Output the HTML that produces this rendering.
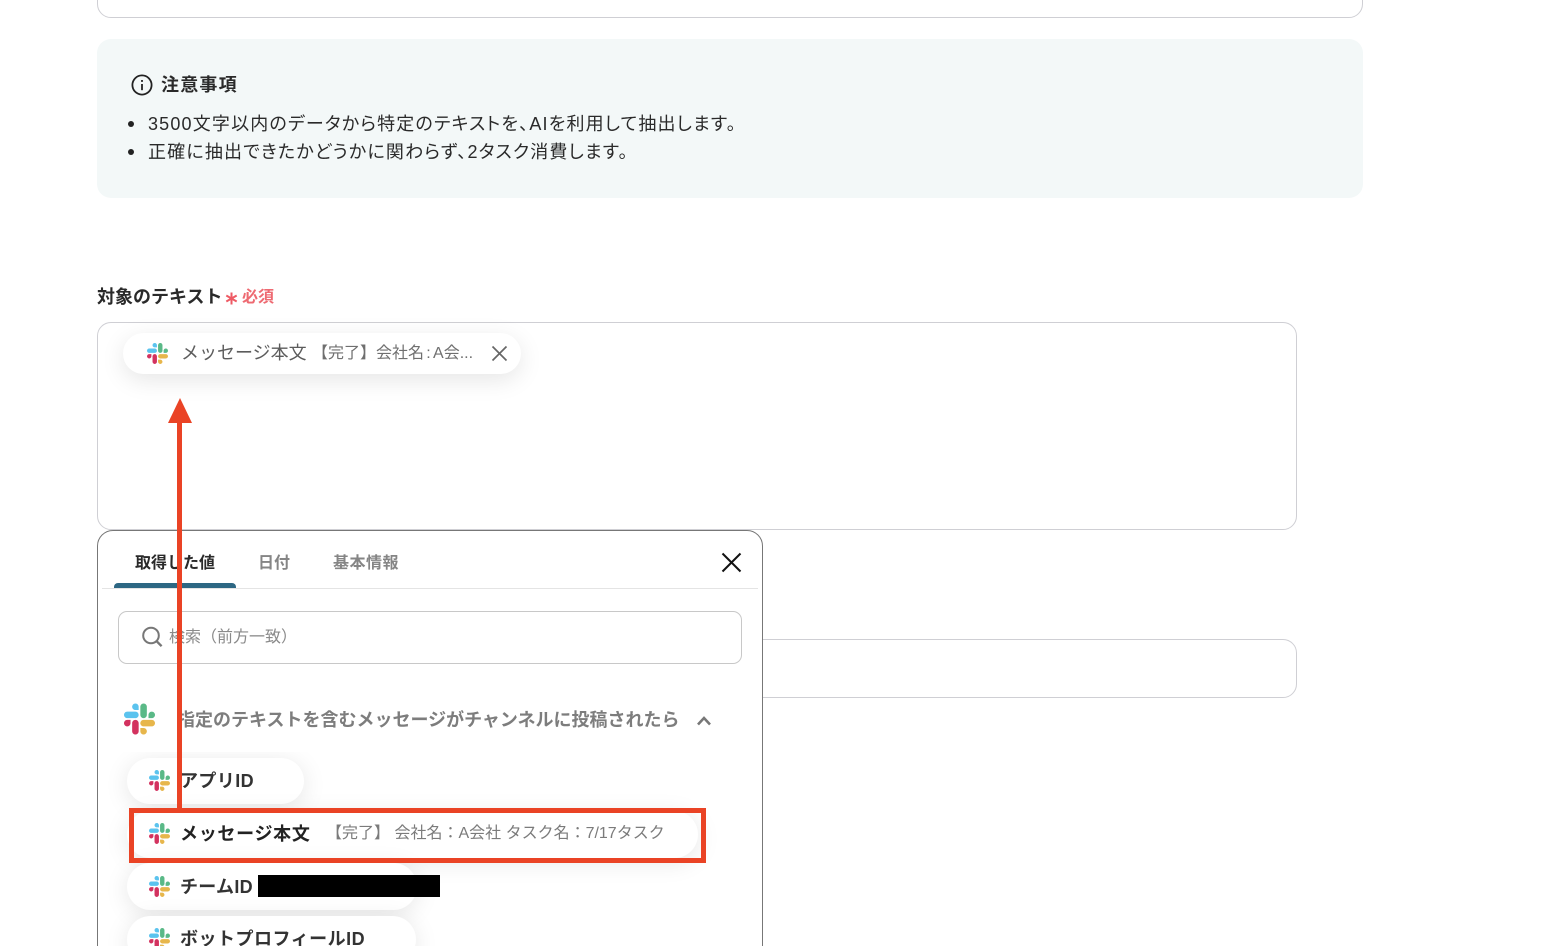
<!DOCTYPE html>
<html lang="ja">
<head>
<meta charset="utf-8">
<style>
html,body{margin:0;padding:0;background:#fff;width:1564px;height:946px;overflow:hidden;}
#root{position:absolute;left:0;top:0;width:1564px;height:946px;overflow:hidden;font-family:"Liberation Sans","Noto Sans CJK JP",sans-serif;color:#2a2a2a;}
.a{position:absolute;white-space:nowrap;}
.box{position:absolute;box-sizing:border-box;background:#fff;border:1px solid #cfcfd4;}
.pill{position:absolute;box-sizing:border-box;background:#fff;border-radius:24px;box-shadow:0 4px 24px rgba(0,0,0,.10);}
.t{position:absolute;white-space:nowrap;line-height:24px;}
.n{font-feature-settings:"palt";letter-spacing:1.17px;}
svg{position:absolute;display:block;}
</style>
</head>
<body>
<div id="root">
<svg width="0" height="0" style="position:absolute">
  <symbol id="slack" viewBox="0 0 122.8 122.8">
    <path d="M25.8 77.6c0 7.1-5.8 12.9-12.9 12.9S0 84.7 0 77.6s5.8-12.9 12.9-12.9h12.9v12.9z" fill="#d3325f"/>
    <path d="M32.3 77.6c0-7.1 5.8-12.9 12.9-12.9s12.9 5.8 12.9 12.9v32.3c0 7.1-5.8 12.9-12.9 12.9s-12.9-5.8-12.9-12.9V77.6z" fill="#d3325f"/>
    <path d="M45.2 25.8c-7.1 0-12.9-5.8-12.9-12.9S38.1 0 45.2 0s12.9 5.8 12.9 12.9v12.9H45.2z" fill="#5bc3ee"/>
    <path d="M45.2 32.3c7.1 0 12.9 5.8 12.9 12.9s-5.8 12.9-12.9 12.9H12.9C5.8 58.1 0 52.3 0 45.2s5.8-12.9 12.9-12.9h32.3z" fill="#5bc3ee"/>
    <path d="M97 45.2c0-7.1 5.8-12.9 12.9-12.9s12.9 5.8 12.9 12.9-5.8 12.9-12.9 12.9H97V45.2z" fill="#5ab987"/>
    <path d="M90.5 45.2c0 7.1-5.8 12.9-12.9 12.9s-12.9-5.8-12.9-12.9V12.9C64.7 5.8 70.5 0 77.6 0s12.9 5.8 12.9 12.9v32.3z" fill="#5ab987"/>
    <path d="M77.6 97c7.1 0 12.9 5.8 12.9 12.9s-5.8 12.9-12.9 12.9-12.9-5.8-12.9-12.9V97h12.9z" fill="#e7b64b"/>
    <path d="M77.6 90.5c-7.1 0-12.9-5.8-12.9-12.9s5.8-12.9 12.9-12.9h32.3c7.1 0 12.9 5.8 12.9 12.9s-5.8 12.9-12.9 12.9H77.6z" fill="#e7b64b"/>
  </symbol>
</svg>

<!-- top box -->
<div class="box" style="left:97px;top:-40px;width:1266px;height:58px;border-radius:14px;"></div>

<!-- notice -->
<div class="a" style="left:97px;top:39px;width:1266px;height:159px;background:#f3f8f8;border-radius:14px;"></div>
<svg style="left:131px;top:74px" width="22" height="22" viewBox="0 0 22 22" fill="none" stroke="#222" stroke-width="1.8"><circle cx="11" cy="11" r="9.6"/><path d="M11 10v6.2"/><path d="M11 6v1.9"/></svg>
<div class="t" style="left:161px;top:73px;font-size:18px;font-weight:700;letter-spacing:1.2px;color:#2a2a2a;">注意事項</div>
<div class="a" style="left:128px;top:121px;width:6px;height:6px;border-radius:50%;background:#222;"></div>
<div class="t n" style="left:148px;top:112px;font-size:18px;color:#2a2a2a;">3500文字以内のデータから特定のテキストを、AIを利用して抽出します。</div>
<div class="a" style="left:128px;top:149px;width:6px;height:6px;border-radius:50%;background:#222;"></div>
<div class="t n" style="left:148px;top:140px;font-size:18px;color:#2a2a2a;">正確に抽出できたかどうかに関わらず、2タスク消費します。</div>

<!-- label -->
<div class="t" style="left:97px;top:285px;font-size:18px;font-weight:700;color:#2a2a2a;">対象のテキスト</div>
<svg style="left:225px;top:292px" width="13" height="13" viewBox="0 0 13 13" fill="none" stroke="#ee5a64" stroke-width="2"><path d="M6.5 0.5v12M1.3 3.5l10.4 6M11.7 3.5l-10.4 6"/></svg>
<div class="t" style="left:242px;top:286px;font-size:16px;font-weight:700;color:#ee6a72;">必須</div>

<!-- textarea -->
<div class="box" style="left:97px;top:322px;width:1200px;height:208px;border-radius:14px;"></div>
<div class="pill" style="left:123px;top:333px;width:398px;height:41px;box-shadow:0 6px 24px rgba(0,0,0,.10);"></div>
<svg style="left:147px;top:343px" width="21" height="21"><use href="#slack"/></svg>
<div class="t" style="left:181px;top:341px;font-size:18px;color:#5c5c5c;">メッセージ本文</div>
<div class="t" style="left:312px;top:342px;font-size:16px;color:#6f6f6f;">【完了】会社名<span style="display:inline-block;width:9px;text-align:center;">:</span>A会...</div>
<svg style="left:491px;top:345px" width="17" height="17" viewBox="0 0 17 17" fill="none" stroke="#666" stroke-width="1.7"><path d="M1.5 1.5l14 14M15.5 1.5l-14 14"/></svg>

<!-- second input -->
<div class="box" style="left:97px;top:639px;width:1200px;height:59px;border-radius:14px;"></div>

<!-- popup -->
<div class="a" style="left:97px;top:530px;width:666px;height:440px;box-sizing:border-box;background:#fff;border:1px solid #777;border-radius:16px;"></div>
<div class="a" style="left:102px;top:588px;width:656px;height:1px;background:#e4e4e4;"></div>
<div class="a" style="left:114px;top:583px;width:122px;height:5px;background:#2d6783;border-radius:4px 4px 0 0;"></div>
<div class="t" style="left:135px;top:552px;font-size:16px;font-weight:700;color:#2a2a2a;">取得した値</div>
<div class="t" style="left:258px;top:552px;font-size:16px;font-weight:700;color:#858585;">日付</div>
<div class="t" style="left:333px;top:552px;font-size:16px;font-weight:700;letter-spacing:.5px;color:#858585;">基本情報</div>
<svg style="left:721px;top:552px" width="21" height="21" viewBox="0 0 21 21" fill="none" stroke="#111" stroke-width="2"><path d="M1.5 1.5l18 18M19.5 1.5l-18 18"/></svg>

<div class="box" style="left:118px;top:611px;width:624px;height:53px;border-radius:9px;border-color:#c8c8c8;"></div>
<svg style="left:141px;top:626px" width="22" height="22" viewBox="0 0 22 22" fill="none" stroke="#777" stroke-width="2"><circle cx="10" cy="9.5" r="7.8"/><path d="M15.6 15.2l5 5" stroke-width="2.4"/></svg>
<div class="t" style="left:169px;top:626px;font-size:16px;color:#8a8a8a;">検索（前方一致）</div>

<!-- section -->
<svg style="left:124px;top:703px" width="31" height="32"><use href="#slack"/></svg>
<div class="t" style="left:177px;top:708px;font-size:18px;font-weight:700;color:#7d7d7d;">指定のテキストを含むメッセージがチャンネルに投稿されたら</div>
<svg style="left:696px;top:715px" width="16" height="11" viewBox="0 0 16 11" fill="none" stroke="#777" stroke-width="2.6"><path d="M2 9.5l6-6.5 6 6.5"/></svg>

<!-- list -->
<div class="a" style="left:99px;top:752px;width:662px;height:194px;overflow:hidden;">
<div class="pill" style="left:28px;top:6px;width:177px;height:46px;"></div>
<div class="pill" style="left:28px;top:59px;width:571px;height:47px;"></div>
<div class="pill" style="left:28px;top:111px;width:290px;height:47px;"></div>
<div class="pill" style="left:28px;top:164px;width:289px;height:47px;"></div>
</div>

<svg style="left:149px;top:770px" width="21" height="21"><use href="#slack"/></svg>
<div class="t" style="left:180px;top:769px;font-size:18px;font-weight:700;letter-spacing:.4px;color:#333;">アプリID</div>

<svg style="left:149px;top:823px" width="21" height="21"><use href="#slack"/></svg>
<div class="t" style="left:180px;top:822px;font-size:18px;font-weight:700;letter-spacing:.7px;color:#222;">メッセージ本文</div>
<div class="t" style="left:326px;top:822px;font-size:16px;color:#7b7b7b;">【完了】 会社名：A会社 タスク名：7/17タスク</div>

<svg style="left:149px;top:876px" width="21" height="21"><use href="#slack"/></svg>
<div class="t" style="left:180px;top:875px;font-size:18px;font-weight:700;letter-spacing:.3px;color:#333;">チームID</div>
<div class="a" style="left:258px;top:875px;width:182px;height:22px;background:#000;"></div>

<svg style="left:149px;top:928px" width="21" height="21"><use href="#slack"/></svg>
<div class="t" style="left:180px;top:927px;font-size:18px;font-weight:700;letter-spacing:.5px;color:#333;">ボットプロフィールID</div>

<!-- annotations -->
<div class="a" style="left:129px;top:808px;width:577px;height:55px;box-sizing:border-box;border:5px solid #ea4325;"></div>
<div class="a" style="left:177px;top:420px;width:5px;height:388px;background:#ea4325;"></div>
<svg style="left:168px;top:398px" width="24" height="25" viewBox="0 0 24 25"><path d="M12 0L24 25H0z" fill="#ea4325"/></svg>
</div>
</body>
</html>
